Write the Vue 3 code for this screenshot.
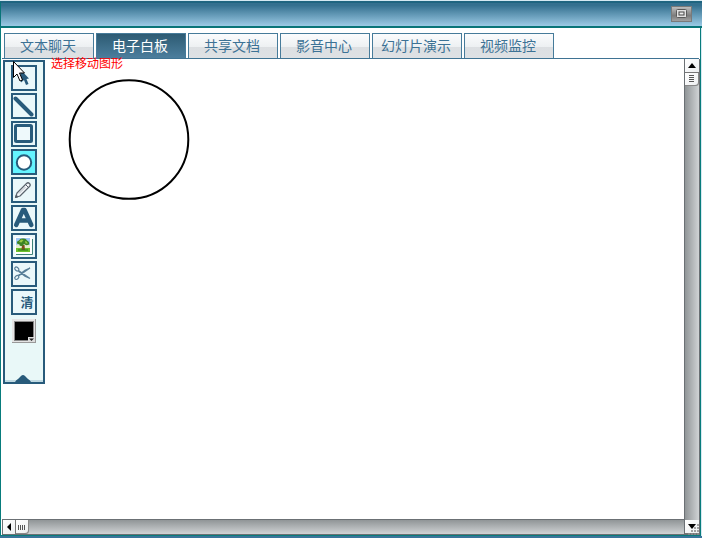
<script setup>
import { ref } from 'vue'

const tabs = ['文本聊天', '电子白板', '共享文档', '影音中心', '幻灯片演示', '视频监控']
const activeTab = ref(1)
const tools = [
  { id: 'select', label: '选择' },
  { id: 'line', label: '直线' },
  { id: 'rect', label: '矩形' },
  { id: 'circle', label: '圆形' },
  { id: 'pencil', label: '铅笔' },
  { id: 'text', label: '文字' },
  { id: 'image', label: '图片' },
  { id: 'cut', label: '剪切' },
  { id: 'clear', label: '清除' }
]
const activeTool = ref('circle')
</script>

<template>
  <div class="window">
    <header class="titlebar">
      <button class="restore" type="button" aria-label="还原">
        <svg width="21" height="16" viewBox="0 0 21 16">
          <rect x="5.500" y="3.500" width="10" height="8" rx="1" fill="#e2e2e2" stroke="#5a5a5a" />
          <rect x="8" y="6" width="5" height="3" fill="#eee" stroke="#444" />
        </svg>
      </button>
    </header>

    <div class="body">
      <nav class="tabs">
        <button
          v-for="(tab, i) in tabs"
          :key="tab"
          type="button"
          class="tab"
          :class="{ active: i === activeTab }"
          @click="activeTab = i"
        >{{ tab }}</button>
      </nav>

      <main class="workspace">
        <aside class="toolbar">
          <button
            v-for="tool in tools"
            :key="tool.id"
            type="button"
            class="tool"
            :class="{ active: tool.id === activeTool }"
            :aria-label="tool.label"
            @click="activeTool = tool.id"
          >
            <svg v-if="tool.id === 'select'" width="22" height="22" viewBox="0 0 22 22">
              <path d="M7 2L16 11.500L13.500 12L15.500 17L13 18L11 13L8 15.500Z" fill="#285b7b" />
            </svg>
            <svg v-else-if="tool.id === 'line'" width="22" height="22" viewBox="0 0 22 22">
              <path d="M2.500 3.500L18.500 19.500" stroke="#285b7b" stroke-width="4" stroke-linecap="round" />
            </svg>
            <svg v-else-if="tool.id === 'rect'" width="22" height="22" viewBox="0 0 22 22">
              <rect x="2.500" y="2.500" width="16" height="16" rx="1" fill="#eef9fb" stroke="#285b7b" stroke-width="3" />
            </svg>
            <svg v-else-if="tool.id === 'circle'" width="22" height="22" viewBox="0 0 22 22">
              <circle cx="11" cy="11.500" r="7.200" fill="#fff" stroke="#285b7b" stroke-width="2" />
            </svg>
            <svg v-else-if="tool.id === 'pencil'" width="22" height="22" viewBox="0 0 22 22" fill="none" stroke="#5a646d" stroke-linejoin="round">
              <path d="M2.500 18.500L4 14L13.500 4.500Q15 3 16.500 4.500Q18 6 16.500 7.500L7 17Z" fill="#f4f8fa" stroke-width="1.200" />
              <path d="M12.500 5.500L15.500 8.500" stroke-width="1" />
              <path d="M6 14.500L12.500 8" stroke="#b5bdc3" />
              <path d="M2.500 18.500L3.300 16L5 17.800Z" fill="#4b5660" />
            </svg>
            <svg v-else-if="tool.id === 'text'" width="22" height="22" viewBox="0 0 22 22" fill="none" stroke="#285b7b" stroke-width="4.500" stroke-linecap="round" stroke-linejoin="round">
              <path d="M3.200 18L10 3H11.500L18.300 18M6.500 13.500H15.500" />
            </svg>
            <svg v-else-if="tool.id === 'image'" width="22" height="22" viewBox="0 0 22 22">
              <rect x="2" y="2" width="17" height="17" fill="#fff" />
              <path d="M19.500 4V19.500H3" fill="none" stroke="#3f8378" />
              <rect x="3" y="3" width="14" height="11" fill="#9ec8f4" />
              <path d="M3 10Q8 8 17 10V14H3Z" fill="#e6edcf" />
              <rect x="3" y="13" width="14" height="4" fill="#6cc02c" />
              <path d="M9 10H11.500L12 15H8.500Z" fill="#80501e" />
              <path d="M4 8.500Q3.500 6 6 5.500Q7 3 10 3.500Q13 3 14 5.500Q17 7 16 9.500Q13 11 11 9L9.500 11Q6 11.500 6.500 9.500Z" fill="#3d8424" />
              <path d="M6 7L8 4.500L10.500 5L8.500 7.500ZM12 6L13.500 6.500L15 8.500H12.500Z" fill="#98ca43" />
              <path d="M5 15H15" stroke="#267818" />
            </svg>
            <svg v-else-if="tool.id === 'cut'" width="22" height="22" viewBox="0 0 22 22" fill="none" stroke="#587f98" stroke-width="1.200">
              <ellipse cx="3.800" cy="6" rx="2.300" ry="1.600" transform="rotate(40 3.800 6)" />
              <ellipse cx="3.800" cy="14.500" rx="2.300" ry="1.600" transform="rotate(-40 3.800 14.500)" />
              <path d="M5.500 7.500L17 15.500L12 13.200L5.200 8M5.500 13L17 5L12 7.300L5.200 12.500" />
            </svg>
            <span v-else class="glyph">清</span>
          </button>

          <button class="swatch" type="button" aria-label="颜色">
            <svg width="24" height="24" viewBox="0 0 24 24">
              <path d="M0 0H24V24H0Z" fill="#999" />
              <path d="M0 0H23V23H0Z" fill="#e4e4e4" />
              <path d="M2 2H22V22H2Z" fill="#888" />
              <path d="M3 3H21V21H3Z" fill="#000" />
              <path d="M16 18H23V23H16Z" fill="#ddd" />
              <path d="M17 19.500H22L19.500 22Z" fill="#222" />
            </svg>
          </button>

          <button class="collapse" type="button" aria-label="收起">
            <svg width="18" height="9" viewBox="0 0 18 9"><path d="M0 9Q1 7 3 6L6 3Q8 1 10 3L13 6Q15 7 16 9Z" fill="#285b7b" /></svg>
          </button>
        </aside>

        <section class="board">
          <span class="hint">选择移动图形</span>
          <svg class="shape" width="122" height="122" viewBox="0 0 122 122">
            <circle cx="61" cy="60.500" r="59.300" fill="none" stroke="#000" stroke-width="2" />
          </svg>
        </section>

        <div class="vscroll">
          <button class="arrow" type="button" aria-label="向上">
            <svg width="14" height="13" viewBox="0 0 14 13"><path d="M3 9L7 4L11 9Z" /></svg>
          </button>
          <div class="thumb">
            <svg width="14" height="13" viewBox="0 0 14 13"><path d="M4 2.500H9M4 4.500H9M4 6.500H9M4 8.500H9" stroke="#555" /></svg>
          </div>
          <button class="arrow end" type="button" aria-label="向下">
            <svg width="14" height="13" viewBox="0 0 14 13"><path d="M3 4L7 9L11 4Z" /></svg>
          </button>
        </div>

        <div class="hscroll">
          <button class="arrow" type="button" aria-label="向左">
            <svg width="13" height="14" viewBox="0 0 13 14"><path d="M8 3L4 7L8 11Z" /></svg>
          </button>
          <div class="thumb">
            <svg width="13" height="13" viewBox="0 0 13 13"><path d="M2.500 4V9M4.500 4V9M6.500 4V9M8.500 4V9" stroke="#555" /></svg>
          </div>
        </div>

        <svg class="grip" width="13" height="12" viewBox="0 0 13 12" fill="#8d8d8d" fill-opacity="0.8">
          <path d="M10 1h2v2h-2zM7 4h2v2h-2zM10 4h2v2h-2zM4 7h2v2h-2zM7 7h2v2h-2zM10 7h2v2h-2zM1 10h2v2h-2zM4 10h2v2h-2zM7 10h2v2h-2zM10 10h2v2h-2z" />
        </svg>
        <svg class="pointer" width="14" height="22" viewBox="0 0 14 22">
          <path d="M1.500 1.500V17.500L5 14L8 21L10.500 20L7.500 13H12.500Z" fill="#fff" stroke="#000" />
        </svg>
      </main>
    </div>
  </div>
</template>

<style>
body {
  margin: 0;
  background: #3a749a;
}
</style>

<style scoped>
* {
  box-sizing: border-box;
}
button {
  padding: 0;
  border: 0;
  border-radius: 0;
  font: inherit;
}
svg {
  display: block;
  flex: none;
}
.window {
  display: flex;
  flex-direction: column;
  height: 100vh;
  padding-top: 1px;
  border-bottom: 2px solid #3a749a;
  background: #d5e9f2;
  font-family: "Liberation Sans", "Noto Sans CJK SC", sans-serif;
}
.titlebar {
  display: flex;
  flex: none;
  justify-content: flex-end;
  align-items: flex-start;
  height: 27px;
  padding: 3px 10px 0 0;
  border-top: 2px solid #1f6580;
  border-bottom: 2px solid #087478;
  border-left: 1px solid #087478;
  background: linear-gradient(#34708f 10%, #9bcae5);
}
.restore {
  width: 21px;
  height: 16px;
  background: linear-gradient(#c4c4c4, #7c7c7c 60%, #a8a8a8);
  box-shadow: inset 0 0 0 1px #7a7a7a;
}
.body {
  display: flex;
  flex: 1;
  flex-direction: column;
  min-height: 0;
  margin-right: 1px;
  border: solid #087c7c;
  border-width: 0 1px 1px;
  background: #fff;
}
.tabs {
  display: flex;
  flex: none;
  gap: 2px;
  margin: 0 1px;
  padding: 5px 2px 0;
  border-bottom: 1px solid #3f7393;
}
.tab {
  width: 90px;
  height: 25px;
  padding-right: 2px;
  border: 1px solid #467b9a;
  border-bottom: 0;
  background: linear-gradient(#fbfcfd, #edf0f2 54%, #dcdfe2 55%, #dee1e4);
  color: #3c7295;
  font-size: 14px;
  line-height: 24px;
  white-space: nowrap;
}
.tab.active {
  background: linear-gradient(#2d5b73, #4c7e9d);
  color: #fff;
}
.workspace {
  position: relative;
  display: grid;
  flex: 1;
  grid-template-columns: 42px 1fr 16px;
  grid-template-rows: 1fr 16px;
  min-height: 0;
  padding: 0 0 0 2px;
}
.toolbar {
  display: flex;
  flex-direction: column;
  align-items: center;
  align-self: start;
  gap: 2px;
  height: 324px;
  margin-top: 1px;
  padding-top: 3px;
  border: 2px solid #285b7b;
  background: #e9f8f8;
  box-shadow: inset 0 -2px #bfd9e2;
}
.tool {
  display: flex;
  flex: none;
  align-items: center;
  justify-content: center;
  width: 26px;
  height: 26px;
  border: 2px solid #285b7b;
  background: #eaf8fa;
  color: #285b7b;
  overflow: hidden;
}
.tool.active {
  background: #64f4ff;
}
.glyph {
  padding: 2px 0 0 6px;
  font-size: 13px;
  font-weight: 700;
  line-height: 16px;
}
.swatch {
  flex: none;
  margin-top: 2px;
}
.collapse {
  margin-top: auto;
  background: none;
}
.board {
  position: relative;
  min-width: 0;
}
.hint {
  position: absolute;
  top: -3px;
  left: 6px;
  color: #f00;
  font-size: 12px;
  line-height: 16px;
  white-space: nowrap;
}
.shape {
  position: absolute;
  top: 20px;
  left: 23px;
}
.vscroll {
  display: flex;
  flex-direction: column;
  grid-column: 3;
  grid-row: 1 / 3;
  border: 1px solid #6b7074;
  border-top: 0;
  background: linear-gradient(90deg, #909597, #d0d3d5);
}
.hscroll {
  display: flex;
  grid-column: 1 / 3;
  grid-row: 2;
  margin-left: -1px;
  border: 1px solid #6b7074;
  border-right: 0;
  background: linear-gradient(#909597, #d0d3d5);
}
.arrow,
.thumb {
  display: flex;
  flex: none;
  align-items: center;
  justify-content: center;
  width: 14px;
  height: 14px;
  background: linear-gradient(135deg, #fff, #eceef0);
}
.thumb {
  border-radius: 0 0 3px 0;
  box-shadow: inset -1px -1px #888;
}
.vscroll .thumb {
  height: 13px;
}
.hscroll .thumb {
  width: 13px;
}
.vscroll .arrow {
  border-bottom: 1px solid #777;
}
.hscroll .arrow {
  width: 13px;
  border-right: 1px solid #777;
}
.vscroll .end {
  margin-top: auto;
}
.grip {
  position: absolute;
  right: 0;
  bottom: 0;
}
.pointer {
  position: absolute;
  top: 1px;
  left: 11px;
}
</style>
